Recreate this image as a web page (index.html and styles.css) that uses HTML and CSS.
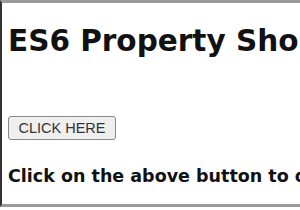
FILE: index.html
```html
<!DOCTYPE html>
<html lang="en">
<head>
  <meta charset="UTF-8" />
  <title>ES6 Property Shorthand</title>
  <link rel="stylesheet" href="styles.css">
</head>
<body>
<div class="frame">
  <h1>ES6 Property Shorthand</h1>
  <button class="btn" id="showBtn">CLICK HERE</button>
  <p class="result" id="result">Click on the above button to display the object</p>
</div>

<script>
  const btn = document.getElementById('showBtn');
  const result = document.getElementById('result');

  btn.addEventListener('click', () => {
    const name = 'Rohan', age = 22;
    const obj = { name, age };
    result.textContent = JSON.stringify(obj);
  });
</script>
</body>
</html>
```

FILE: styles.css
```css
body {
  margin: 0;
  background: #fff;
  font-family: "DejaVu Sans", sans-serif;
  overflow: hidden;
}
.frame {
  height: 201px;
  border-top: 3px solid #9a9a9a;
  border-left: 2px solid #333;
  border-bottom: 3px solid #9a9a9a;
  padding-left: 6px;
  white-space: nowrap;
  overflow: hidden;
}
h1 {
  margin: 19px 0 0;
  font-size: 29.5px;
  font-weight: 700;
  color: #111;
  line-height: 39px;
}
.btn {
  display: block;
  margin-top: 55px;
  width: 108px;
  height: 24px;
  padding: 0;
  font-family: "Liberation Sans", Arial, sans-serif;
  font-size: 14.5px;
  color: #333;
  background: #efefef;
  border: 1px solid #888;
  border-radius: 3px;
}
.result {
  margin: 24px 0 0;
  font-size: 17.5px;
  font-weight: 700;
  color: #111;
  line-height: 24px;
}
```
